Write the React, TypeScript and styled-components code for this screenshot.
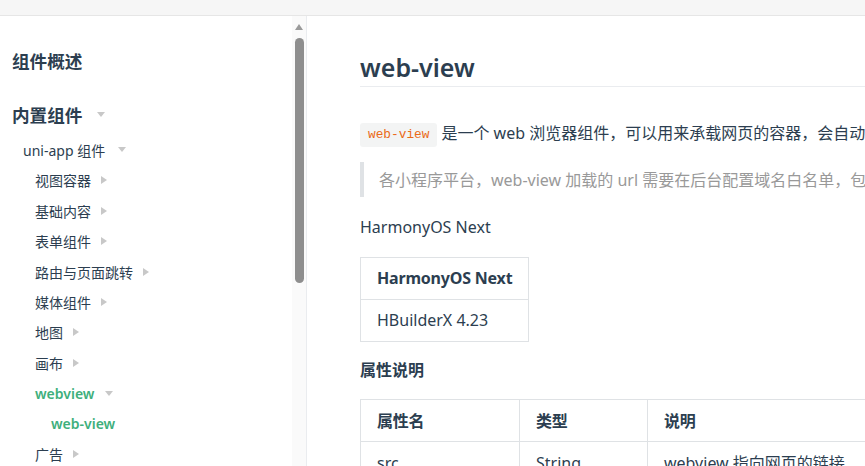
import React from "react";
import styled, { createGlobalStyle } from "styled-components";

const GlobalStyle = createGlobalStyle`
  html, body { margin: 0; padding: 0; background: #fff; overflow: hidden; }
  body {
    font-family: "Noto Sans", "Noto Sans CJK SC", sans-serif;
    color: #2c3e50;
    -webkit-font-smoothing: antialiased;
  }
  * { box-sizing: border-box; }
`;

const Page = styled.div`
  display: flex;
  flex-direction: column;
  width: 865px;
  height: 466px;
  overflow: hidden;
`;

const TopBar = styled.div`
  height: 16px;
  flex: none;
  background: #f6f6f6;
  border-bottom: 1px solid #e6e6e6;
`;

const Body = styled.div`
  display: flex;
  flex: 1;
  min-height: 0;
`;

const Sidebar = styled.aside`
  width: 307px;
  flex: none;
  display: flex;
  border-right: 1px solid #eaecef;
  overflow: hidden;
`;

const Nav = styled.nav`
  flex: 1;
  display: flex;
  flex-direction: column;
  padding-top: 29px;
`;

const ScrollTrack = styled.div`
  width: 14px;
  flex: none;
  background: #fafafa;
  display: flex;
  flex-direction: column;
  align-items: center;
  padding-top: 8px;
`;

const ScrollArrow = styled.span`
  width: 0;
  height: 0;
  border-left: 4.5px solid transparent;
  border-right: 4.5px solid transparent;
  border-bottom: 6px solid #9a9a9a;
`;

const ScrollThumb = styled.div`
  margin-top: 8px;
  width: 9px;
  height: 245px;
  border-radius: 5px;
  background: #8e8e8e;
`;

const Heading = styled.div<{ $gap: number }>`
  height: 30.4px;
  flex: none;
  display: flex;
  align-items: center;
  padding-left: 12px;
  font-size: 17.6px;
  font-weight: 700;
  color: #2c3e50;
  margin-bottom: ${(p) => p.$gap}px;
`;

const Item = styled.div<{ $indent: number; $active?: boolean }>`
  height: 30.45px;
  flex: none;
  display: flex;
  align-items: center;
  padding-left: ${(p) => p.$indent}px;
  font-size: 14px;
  font-weight: ${(p) => (p.$active ? 600 : 400)};
  color: ${(p) => (p.$active ? "#3eaf7c" : "#2c3e50")};
`;

const Arrow = styled.span<{ $dir: "down" | "right"; $gap: number }>`
  display: inline-block;
  width: 0;
  height: 0;
  margin-left: ${(p) => p.$gap}px;
  ${(p) =>
    p.$dir === "down"
      ? `border-left: 4px solid transparent;
         border-right: 4px solid transparent;
         border-top: 5.5px solid #c8c8c8;`
      : `border-top: 4px solid transparent;
         border-bottom: 4px solid transparent;
         border-left: 6px solid #c8c8c8;`}
`;

const Main = styled.main`
  flex: 1;
  min-width: 0;
  overflow: hidden;
  padding-left: 53px;
`;

const Content = styled.article`
  width: 760px;
`;

const Title = styled.h1`
  margin: 33px 0 0;
  font-size: 25px;
  font-weight: 600;
  line-height: 36px;
  padding-bottom: 1px;
  border-bottom: 1px solid #eaecef;
  color: #2c3e50;
`;

const Para = styled.p<{ $top: number }>`
  margin: ${(p) => p.$top}px 0 0;
  font-size: 16px;
  line-height: 25.6px;
  white-space: nowrap;
`;

const Code = styled.code`
  display: inline-block;
  height: 24px;
  line-height: 24px;
  padding: 0 8px;
  margin-right: 4px;
  border-radius: 3px;
  background: #f3f4f4;
  color: #ea6a17;
  font-family: "Liberation Mono", "DejaVu Sans Mono", monospace;
  font-size: 12.8px;
  vertical-align: middle;
`;

const Quote = styled.blockquote`
  margin: 15.4px 0 0;
  border-left: 4px solid #dfe2e5;
  padding: 6px 0 3.4px 15px;
  color: #999;
  font-size: 16px;
  line-height: 25.6px;
  white-space: nowrap;
`;

const SubTitle = styled.h4`
  margin: 16px 0 0;
  font-size: 16px;
  font-weight: 700;
  line-height: 25.6px;
`;

const Table = styled.table<{ $full?: boolean }>`
  margin-top: 16px;
  border-collapse: collapse;
  width: ${(p) => (p.$full ? "100%" : "auto")};
  font-size: 16px;
  table-layout: ${(p) => (p.$full ? "fixed" : "auto")};
`;

const Th = styled.th<{ $w?: number }>`
  border: 1px solid #dfe2e5;
  padding: 8.5px 16px;
  line-height: 24px;
  text-align: left;
  font-weight: 700;
  white-space: nowrap;
  letter-spacing: -0.2px;
  ${(p) => (p.$w ? `width: ${p.$w}px;` : "")}
`;

const Td = styled.td`
  border: 1px solid #dfe2e5;
  padding: 8.5px 16px;
  line-height: 24px;
  white-space: nowrap;
  overflow: hidden;
`;

const subItems = ["视图容器", "基础内容", "表单组件", "路由与页面跳转", "媒体组件", "地图", "画布"];

export default function App() {
  return (
    <>
      <GlobalStyle />
      <Page>
        <TopBar />
        <Body>
          <Sidebar>
            <Nav>
              <Heading $gap={23.6}>组件概述</Heading>
              <Heading $gap={5.2}>
                内置组件
                <Arrow $dir="down" $gap={15} />
              </Heading>
              <Item $indent={23}>
                uni-app 组件
                <Arrow $dir="down" $gap={13} />
              </Item>
              {subItems.map((s) => (
                <Item key={s} $indent={35}>
                  {s}
                  <Arrow $dir="right" $gap={10} />
                </Item>
              ))}
              <Item $indent={35} $active>
                webview
                <Arrow $dir="down" $gap={11} />
              </Item>
              <Item $indent={51} $active>
                web-view
              </Item>
              <Item $indent={35}>
                广告
                <Arrow $dir="right" $gap={10} />
              </Item>
            </Nav>
            <ScrollTrack>
              <ScrollArrow />
              <ScrollThumb />
            </ScrollTrack>
          </Sidebar>
          <Main>
            <Content>
              <Title>web-view</Title>
              <Para $top={34}>
                <Code>web-view</Code>是一个 web 浏览器组件，可以用来承载网页的容器，会自动铺满整个页面。
              </Para>
              <Quote>各小程序平台，web-view 加载的 url 需要在后台配置域名白名单，包括内部再次 iframe 内嵌的其他 url 。</Quote>
              <Para $top={18}>HarmonyOS Next</Para>
              <Table>
                <thead>
                  <tr>
                    <Th>HarmonyOS Next</Th>
                  </tr>
                </thead>
                <tbody>
                  <tr>
                    <Td>HBuilderX 4.23</Td>
                  </tr>
                </tbody>
              </Table>
              <SubTitle>属性说明</SubTitle>
              <Table $full>
                <thead>
                  <tr>
                    <Th $w={159}>属性名</Th>
                    <Th $w={128}>类型</Th>
                    <Th>说明</Th>
                  </tr>
                </thead>
                <tbody>
                  <tr>
                    <Td>src</Td>
                    <Td>String</Td>
                    <Td>webview 指向网页的链接</Td>
                  </tr>
                </tbody>
              </Table>
            </Content>
          </Main>
        </Body>
      </Page>
    </>
  );
}
